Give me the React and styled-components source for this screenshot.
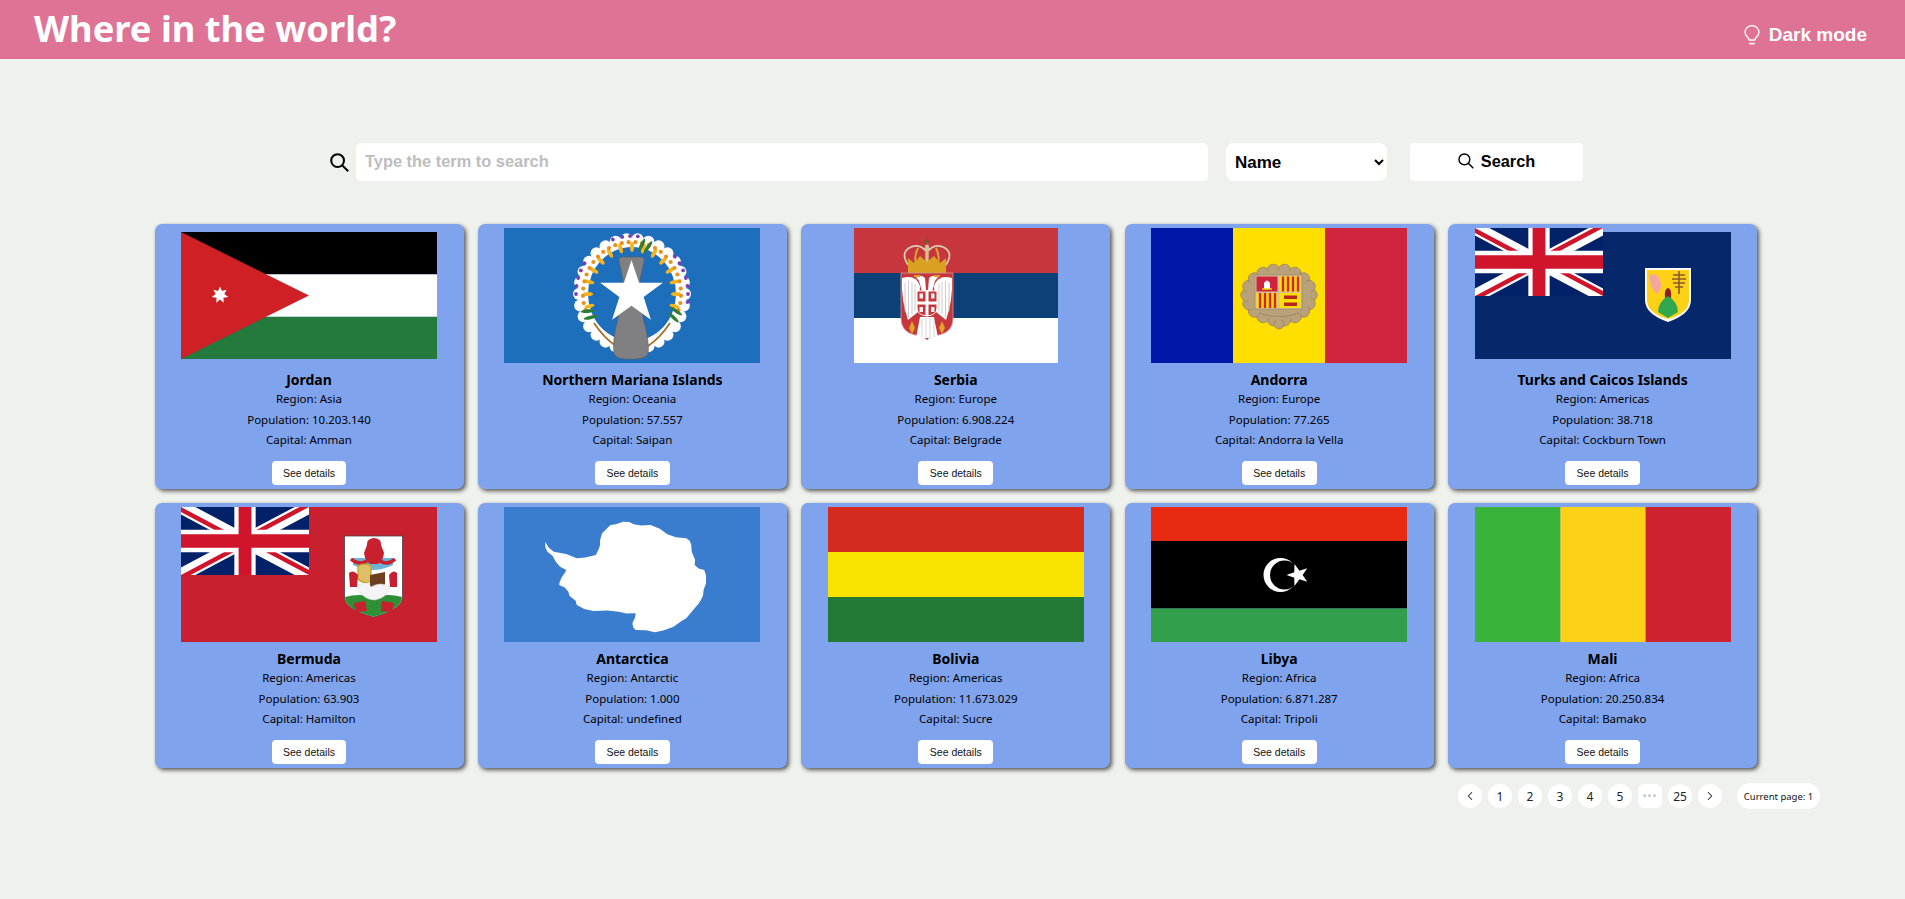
import React from "react";
import styled, { createGlobalStyle } from "styled-components";
import { ChevronLeft, ChevronRight } from "lucide-react";

const Global = createGlobalStyle`
  html, body { margin: 0; padding: 0; background: #eff1ec; }
  body { font-family: "Noto Sans", sans-serif; color: #000; }
  * { box-sizing: border-box; }
`;

const Header = styled.header`
  height: 59px;
  background: #de7395;
  color: #fff;
  display: flex;
  justify-content: space-between;
  padding: 0 38px 0 34px;
`;
const Title = styled.h1`
  margin: 0;
  font: 700 36.3px/57px "Noto Sans", sans-serif;
`;
const ModeToggle = styled.div`
  display: flex;
  align-items: center;
  gap: 9px;
  padding-top: 10px;
  font: 700 19px "Liberation Sans", sans-serif;
`;
const Main = styled.main`
  padding: 84px 0 0 8px;
`;
const SearchRow = styled.form`
  width: 1253px;
  height: 38px;
  margin: 0 auto;
  display: flex;
  align-items: center;
`;
const Magnifier = styled.svg`
  flex: none;
  margin-right: ${(p) => p.$gap}px;
`;
const TermInput = styled.input`
  width: 852px;
  height: 38px;
  border: none;
  outline: none;
  border-radius: 5px;
  background: #fff;
  padding: 0 9px 2px;
  font: 700 16.4px "Liberation Sans", sans-serif;
  &::placeholder { color: #bdbdbd; opacity: 1; }
`;
const FieldSelect = styled.select`
  width: 161px;
  height: 38px;
  margin-left: 18px;
  border: none;
  outline: none;
  border-radius: 8px;
  background: #fff;
  padding: 0 5px;
  color: #000;
  font: 700 17px "Liberation Sans", sans-serif;
`;
const SearchButton = styled.button`
  width: 173px;
  height: 38px;
  margin-left: 23px;
  padding: 0 0 2px;
  border: none;
  border-radius: 4px;
  background: #fff;
  color: #000;
  display: flex;
  align-items: center;
  justify-content: center;
  font: 700 16.3px "Liberation Sans", sans-serif;
`;
const Grid = styled.section`
  width: 1604px;
  margin: 43px auto 0;
  display: grid;
  grid-template-columns: repeat(5, 309px);
  column-gap: 14.4px;
  row-gap: 14px;
`;
const Card = styled.article`
  height: 265px;
  background: #7fa3ec;
  border-radius: 7px;
  box-shadow: 2px 2px 4px #555;
  padding-top: 4px;
  display: flex;
  flex-direction: column;
  align-items: center;
  text-align: center;
`;
const FlagBox = styled.div`
  height: 135px;
  flex: none;
  display: flex;
  justify-content: center;
`;
const Name = styled.h2`
  margin: 8px 0 0;
  font: 700 14px/18px "Noto Sans", sans-serif;
`;
const Info = styled.p`
  margin: 0;
  font: 400 11.5px/20.5px "Noto Sans", sans-serif;
`;
const DetailsButton = styled.button`
  margin-top: 10px;
  height: 24px;
  padding: 0 11.5px;
  border: none;
  border-radius: 4px;
  background: #fff;
  color: #111;
  font: 400 10.5px "Liberation Sans", sans-serif;
`;
const PagerRow = styled.nav`
  margin-top: 15px;
  padding-right: 85px;
  display: flex;
  justify-content: flex-end;
  align-items: center;
`;
const PageItem = styled.div`
  width: 24px;
  height: 24px;
  margin-right: 6px;
  border-radius: ${(p) => (p.$dots ? "6px" : "50%")};
  background: #fff;
  color: ${(p) => (p.$dots ? "#bbb" : "#222")};
  display: flex;
  align-items: center;
  justify-content: center;
  font: 400 ${(p) => (p.$dots ? "10px" : "12px")} "Noto Sans", sans-serif;
  letter-spacing: ${(p) => (p.$dots ? "1px" : "0")};
`;
const CurrentPage = styled.div`
  height: 26px;
  width: 83px;
  margin-left: 9px;
  border-radius: 13px;
  background: #fff;
  display: flex;
  align-items: center;
  justify-content: center;
  font: 400 9.5px "Noto Sans", sans-serif;
  color: #111;
`;

const SearchGlyph = ({ size, gap, weight }) => (
  <Magnifier $gap={gap} width={size} height={size} viewBox="0 0 19 19" fill="none" stroke="#000" strokeWidth={weight}>
    <circle cx="7.6" cy="7.6" r="6.4" />
    <path d="M12.2 12.2 18.2 18.2" />
  </Magnifier>
);

const Bulb = () => (
  <svg width="16" height="20" viewBox="0 0 16 20" fill="none" stroke="#fff" strokeWidth="1.3">
    <path d="M5.2 15C5 12.4 1 10.8 1 7.6a7 7 0 0 1 14 0C15 10.8 11 12.4 10.8 15Z" />
    <path d="M5.2 18.6h5.6" strokeWidth="1.6" />
  </svg>
);

const Jack = ({ id, y = 0, navy = "#012169" }) => (
  <svg x="0" y={y} width="128" height="68" viewBox="0 0 60 30" preserveAspectRatio="none">
    <clipPath id={id}>
      <path d="M30 15h30v15zv15H0zH0V0zV0h30z" />
    </clipPath>
    <rect width="60" height="30" fill={navy} />
    <path d="M0 0 60 30M60 0 0 30" stroke="#fff" strokeWidth="6" />
    <path d="M0 0 60 30M60 0 0 30" stroke="#cf142b" strokeWidth="4" clipPath={`url(#${id})`} />
    <path d="M30 0V30M0 15H60" stroke="#fff" strokeWidth="10" />
    <path d="M30 0V30M0 15H60" stroke="#cf142b" strokeWidth="6" />
  </svg>
);

const starPoints = (cx, cy, R, r, n, rot = -90) =>
  Array.from({ length: n * 2 }, (_, i) => {
    const a = ((rot + (i * 180) / n) * Math.PI) / 180;
    const d = i % 2 ? r : R;
    return `${(cx + d * Math.cos(a)).toFixed(2)},${(cy + d * Math.sin(a)).toFixed(2)}`;
  }).join(" ");

const onRing = (rx, ry, deg, cx = 128, cy = 66) => {
  const a = (deg * Math.PI) / 180;
  return [cx + rx * Math.cos(a), cy + ry * Math.sin(a)];
};
const range = (from, to, step) => {
  const out = [];
  for (let v = from; v <= to; v += step) out.push(v);
  return out;
};

const Svg = ({ w = 256, children }) => (
  <svg width={w} height="135" viewBox={`0 0 ${w} 135`}>{children}</svg>
);

const Jordan = () => (
  <Svg>
    <rect y="4" width="256" height="42.4" fill="#000" />
    <rect y="46.4" width="256" height="42.4" fill="#fff" />
    <rect y="88.8" width="256" height="42.2" fill="#237a3c" />
    <polygon points="0,4 128,67.5 0,131" fill="#ce2025" />
    <polygon points={starPoints(39, 67, 8.5, 4.4, 7)} fill="#fff" />
  </Svg>
);

const Mariana = () => (
  <Svg>
    <rect width="256" height="135" fill="#1e6fbb" />
    {range(0, 348, 12).map((d) => {
      const [x, y] = onRing(53, 55, d);
      return <circle key={d} cx={x} cy={y} r="6" fill="#fff" />;
    })}
    <ellipse cx="128" cy="66" rx="54" ry="56" fill="#fff" />
    <ellipse cx="128" cy="66" rx="44" ry="47" fill="#1e6fbb" />
    {range(-195, 15, 15).map((d) => {
      const [x, y] = onRing(44, 47, d);
      return <ellipse key={d} cx={x} cy={y} rx="2" ry="5" fill="#f4b41f" transform={`rotate(${d + 90} ${x} ${y})`} />;
    })}
    {range(-198, 18, 8).map((d) => {
      const [x, y] = onRing(49, 52, d);
      return <circle key={d} cx={x} cy={y} r="2.1" fill={d % 16 ? "#e8921c" : "#c8261c"} />;
    })}
    {[-180, -172, -164, -156, -148, -110, -100, -92, -84, -40, -32, -24, -16, -8, 0, 8].map((d) => {
      const [x, y] = onRing(56, 58, d);
      return <circle key={d} cx={x} cy={y} r="1.9" fill="#7b3fb5" />;
    })}
    {[-78, -70, 20, 28, 160, 152].map((d) => {
      const [x, y] = onRing(47, 50, d);
      return <ellipse key={d} cx={x} cy={y} rx="1.8" ry="7" fill="#2e7d32" transform={`rotate(${d + 105} ${x} ${y})`} />;
    })}
    <path d="M90 95Q100 110 112 118M166 95Q156 110 144 118" fill="none" stroke="#a9702a" strokeWidth="1.8" />
    <path d="M115 33Q114 29 119 29H136Q141 29 140 34L136 52L139 90Q146 115 144 126Q140 132 127 131Q113 132 110 126Q108 112 114 90L119 52Z" fill="#808083" stroke="#555" strokeWidth=".5" />
    <polygon points={starPoints(127.5, 65, 33, 12.8, 5)} fill="#fff" />
  </Svg>
);

const Serbia = () => (
  <Svg w={204}>
    <rect width="204" height="45" fill="#c6363c" />
    <rect y="45" width="204" height="45" fill="#0c4076" />
    <rect y="90" width="204" height="45" fill="#fff" />
    <path d="M55 38Q46 26 55 20Q64 15 71 22L73 16 75 22Q82 15 91 20Q100 26 91 38" fill="#c6363c" stroke="#d8cdb4" strokeWidth="1.8" />
    <path d="M64 20Q60 28 62 37M82 20Q86 28 84 37" fill="none" stroke="#d8a63a" strokeWidth="2" />
    <path d="M73 18V36" stroke="#d9c08a" strokeWidth="3.4" />
    <path d="M73 11V17M70.5 13.5H75.5" stroke="#6d5a2f" strokeWidth="1.6" />
    <path d="M54 45V30L60 35 66 28 73 34 80 28 86 35 92 30V45Z" fill="#d9a021" />
    <path d="M47 45H99V90Q99 104 85 107Q76 108 73 112Q70 108 61 107Q47 104 47 90Z" fill="#c6363c" stroke="#d49a9a" strokeWidth=".8" />
    <path d="M48 50Q62 46 66 58L64 84 54 92Q47 72 48 50Z" fill="#fff" />
    <path d="M98 50Q84 46 80 58L82 84 92 92Q99 72 98 50Z" fill="#fff" />
    <path d="M51 55V84M54.5 53V89M58 54V86M61 56V83M95 55V84M91.5 53V89M88 54V86M85 56V83" stroke="#a9a9a9" strokeWidth=".6" />
    <path d="M62 49Q67 46 71 50L72 62H74L75 50Q79 46 84 49L81 53 78 64H68L65 53Z" fill="#fff" />
    <path d="M60 48H66M80 48H86" stroke="#d9a021" strokeWidth="2" />
    <path d="M63 63H83V80Q83 87 73 88Q63 87 63 80Z" fill="#c6363c" stroke="#fff" />
    <path d="M73 63V88M63 75H83" stroke="#fff" strokeWidth="3" />
    <rect x="65.5" y="65.5" width="3.5" height="5" fill="#eee" />
    <rect x="77" y="65.5" width="3.5" height="5" fill="#eee" />
    <rect x="65.5" y="79" width="3.5" height="5" fill="#eee" />
    <rect x="77" y="79" width="3.5" height="5" fill="#eee" />
    <path d="M66 89H80L84 110H62Z" fill="#fff" />
    <path d="M68 90V109M72 90V110M76 90V110M80 90V109" stroke="#aaa" strokeWidth=".5" />
    <path d="M58 93 61 100 58 106 55 100Z M88 93 91 100 88 106 85 100Z" fill="#e0a526" />
  </Svg>
);

const Andorra = () => (
  <Svg>
    <rect width="82" height="135" fill="#0018a8" />
    <rect x="82" width="92" height="135" fill="#fedf00" />
    <rect x="174" width="82" height="135" fill="#d0233c" />
    {range(0, 340, 20).map((d) => {
      const [x, y] = onRing(32, 25, d, 128, 67);
      return <circle key={d} cx={x} cy={y} r="6.2" fill="#b9a27a" stroke="#93805c" strokeWidth=".7" />;
    })}
    <circle cx="128" cy="96" r="5" fill="#b9a27a" stroke="#93805c" strokeWidth=".7" />
    <ellipse cx="128" cy="67" rx="32" ry="25" fill="#b9a27a" />
    <rect x="104" y="47" width="47" height="34" fill="#d3c19b" stroke="#93805c" strokeWidth=".6" />
    <rect x="105.5" y="48.5" width="21" height="15" fill="#d0233c" />
    <path d="M113 61V55Q116 50 119 55V61Z" fill="#fff" />
    <path d="M111 61H121" stroke="#fedf00" strokeWidth="1.4" />
    <rect x="128.5" y="48.5" width="21" height="15" fill="#fedf00" />
    <path d="M132 48.5V63.5M137 48.5V63.5M142 48.5V63.5M147 48.5V63.5" stroke="#d0233c" strokeWidth="2.4" />
    <rect x="105.5" y="65" width="21" height="15" fill="#fedf00" />
    <path d="M109 65V80M114 65V80M119 65V80M124 65V80" stroke="#d0233c" strokeWidth="2.4" />
    <rect x="128.5" y="65" width="21" height="15" fill="#fedf00" />
    <path d="M133 67.5H146V71H133ZM133 74.5H146V78H133Z" fill="#b5271d" />
    <path d="M108 85Q128 92 148 85" fill="none" stroke="#8f7b58" strokeWidth="1" strokeDasharray="2 1" />
  </Svg>
);

const Turks = () => (
  <Svg>
    <rect y="4" width="256" height="127" fill="#06276a" />
    <Jack id="jack-tc" />
    <path d="M170 40H216V72Q216 86 193 94Q170 86 170 72Z" fill="#fff" />
    <path d="M172 42H214V72Q214 85 193 91Q172 85 172 72Z" fill="#fcd116" />
    <path d="M175 47Q182 44 185 52Q188 60 182 66Q174 60 175 47Z" fill="#f2a6a0" />
    <path d="M204 43V66M198 47H210M197 51H211M198 55H210M200 59H208" stroke="#8a5a2b" strokeWidth="1.6" />
    <path d="M190 70Q189 61 193 60Q197 61 196 70Z" fill="#8c1f1f" />
    <path d="M193 68Q183 74 183 84L193 90 203 84Q203 74 193 68Z" fill="#2fa84f" />
  </Svg>
);

const Bermuda = () => (
  <Svg>
    <rect width="256" height="135" fill="#c8202f" />
    <Jack id="jack-bm" />
    <path d="M163.5 29H221.5V90Q221.5 102 192.5 110Q163.5 102 163.5 90Z" fill="#fff" stroke="#444" strokeWidth=".8" />
    <path d="M164 90Q178 86 192.5 90Q207 86 221 90Q221 102 192.5 109.5Q164 102 164 90Z" fill="#2f8f35" />
    <path d="M172 51H212V58Q192 68 172 58Z" fill="#6db5d6" />
    <path d="M186 38Q185 32 193 31Q201 32 200 38L203 46Q202 54 197 57H189Q184 54 183 46Z" fill="#c8202f" />
    <path d="M170 52Q178 59 186 54M214 52Q207 59 199 54" stroke="#c8202f" strokeWidth="3.4" fill="none" />
    <path d="M177 59Q183 55 190 59V74Q183 78 177 72Z" fill="#dcbf68" stroke="#c9a017" strokeWidth="1.2" />
    <path d="M189 68L204 65V80L189 83Z" fill="#6d4021" />
    <path d="M176 80Q186 72 190 80Q200 74 209 80Q206 91 194 93Q182 93 176 80Z" fill="#f4f4f4" stroke="#ddd" strokeWidth=".5" />
    <path d="M168 66Q172 62 177 68L176 80 169 80ZM216 66Q212 62 208 68L209 80 216 80ZM173 96 184 94 186 104 175 105ZM201 94 213 96 211 105 200 104Z" fill="#c8202f" />
  </Svg>
);

const rawAntarctic = [[965,140],[985,170],[1040,190],[1085,180],[1095,150],[1100,115],[1120,90],[1150,80],[1175,88],[1215,90],[1255,118],[1300,130],[1312,150],[1318,185],[1320,210],[1343,225],[1347,265],[1340,300],[1330,325],[1300,370],[1270,395],[1225,412],[1180,405],[1172,385],[1180,355],[1140,350],[1080,348],[1040,330],[1030,310],[1020,290],[998,270],[1005,245],[1015,225],[990,200],[970,170]]
  .map(([x, y]) => [(x - 867) / 2.376, (y - 36) / 3]);
const antarctic = rawAntarctic
  .flatMap(([x, y], i) => {
    const [nx, ny] = rawAntarctic[(i + 1) % rawAntarctic.length];
    const wobble = i % 2 ? 0.9 : -0.9;
    return [`${x.toFixed(1)},${y.toFixed(1)}`, `${((x + nx) / 2 + wobble).toFixed(1)},${((y + ny) / 2 - wobble).toFixed(1)}`];
  })
  .join(" ");

const Antarctica = () => (
  <Svg>
    <rect width="256" height="135" fill="#3a7dce" />
    <polygon points={antarctic} fill="#fff" />
  </Svg>
);

const Bolivia = () => (
  <Svg>
    <rect width="256" height="45" fill="#d52b1e" />
    <rect y="45" width="256" height="45" fill="#f9e300" />
    <rect y="90" width="256" height="45" fill="#237a36" />
  </Svg>
);

const Libya = () => (
  <Svg>
    <rect width="256" height="34" fill="#e82a12" />
    <rect y="34" width="256" height="67.5" fill="#000" />
    <rect y="101.5" width="256" height="33.5" fill="#32a04b" />
    <circle cx="129.5" cy="68" r="17" fill="#fff" />
    <circle cx="133.5" cy="68" r="14.5" fill="#000" />
    <polygon points={starPoints(147, 68, 11.5, 4.6, 5, 180)} fill="#fff" />
  </Svg>
);

const Mali = () => (
  <Svg>
    <rect width="85.4" height="135" fill="#39b339" />
    <rect x="85.4" width="85.3" height="135" fill="#fcd116" />
    <rect x="170.7" width="85.3" height="135" fill="#ce2230" />
  </Svg>
);

const countries = [
  ["Jordan", Jordan, "Asia", "10.203.140", "Amman"],
  ["Northern Mariana Islands", Mariana, "Oceania", "57.557", "Saipan"],
  ["Serbia", Serbia, "Europe", "6.908.224", "Belgrade"],
  ["Andorra", Andorra, "Europe", "77.265", "Andorra la Vella"],
  ["Turks and Caicos Islands", Turks, "Americas", "38.718", "Cockburn Town"],
  ["Bermuda", Bermuda, "Americas", "63.903", "Hamilton"],
  ["Antarctica", Antarctica, "Antarctic", "1.000", "undefined"],
  ["Bolivia", Bolivia, "Americas", "11.673.029", "Sucre"],
  ["Libya", Libya, "Africa", "6.871.287", "Tripoli"],
  ["Mali", Mali, "Africa", "20.250.834", "Bamako"],
];

export default function App() {
  return (
    <>
      <Global />
      <Header>
        <Title>Where in the world?</Title>
        <ModeToggle>
          <Bulb />
          Dark mode
        </ModeToggle>
      </Header>
      <Main>
        <SearchRow>
          <SearchGlyph size={19} gap={7} weight={2} />
          <TermInput placeholder="Type the term to search" />
          <FieldSelect defaultValue="Name">
            <option>Name</option>
          </FieldSelect>
          <SearchButton type="button">
            <SearchGlyph size={16} gap={7} weight={1.7} />
            Search
          </SearchButton>
        </SearchRow>
        <Grid>
          {countries.map(([name, Flag, region, population, capital]) => (
            <Card key={name}>
              <FlagBox>
                <Flag />
              </FlagBox>
              <Name>{name}</Name>
              <Info>Region: {region}</Info>
              <Info>Population: {population}</Info>
              <Info>Capital: {capital}</Info>
              <DetailsButton type="button">See details</DetailsButton>
            </Card>
          ))}
        </Grid>
        <PagerRow>
          <PageItem><ChevronLeft size={14} strokeWidth={1.8} /></PageItem>
          {[1, 2, 3, 4, 5].map((n) => (
            <PageItem key={n}>{n}</PageItem>
          ))}
          <PageItem $dots>•••</PageItem>
          <PageItem>25</PageItem>
          <PageItem><ChevronRight size={14} strokeWidth={1.8} /></PageItem>
          <CurrentPage>Current page: 1</CurrentPage>
        </PagerRow>
      </Main>
    </>
  );
}
